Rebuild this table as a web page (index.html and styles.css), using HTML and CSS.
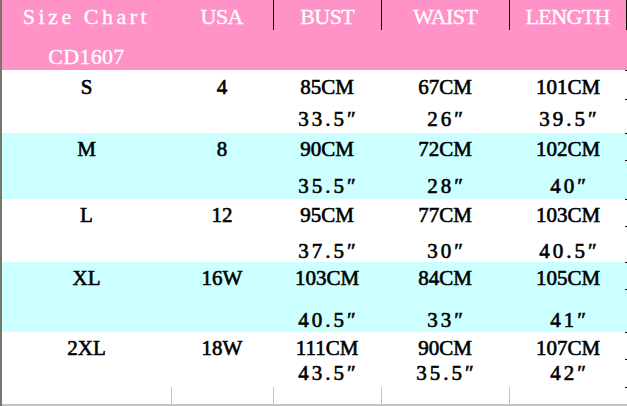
FILE: index.html
```html
<!DOCTYPE html>
<html>
<head>
<meta charset="utf-8">
<link rel="stylesheet" href="styles.css">
</head>
<body>
<div class="sheet">
  <div class="row head">
    <div class="cell"><div class="l1 wide">Size Chart</div><div class="l2">CD1607</div></div>
    <div class="cell"><div class="l1 caps">USA</div></div>
    <div class="cell sep"><div class="l1 caps">BUST</div></div>
    <div class="cell sep"><div class="l1 caps">WAIST</div></div>
    <div class="cell sep last"><div class="l1 caps">LENGTH</div></div>
  </div>
  <div class="row data r-s">
    <div class="cell"><div class="l1">S</div></div>
    <div class="cell"><div class="l1">4</div></div>
    <div class="cell"><div class="l1">85CM</div><div class="l2">33.5″</div></div>
    <div class="cell"><div class="l1">67CM</div><div class="l2">26″</div></div>
    <div class="cell"><div class="l1">101CM</div><div class="l2">39.5″</div></div>
  </div>
  <div class="row data alt r-m">
    <div class="cell"><div class="l1">M</div></div>
    <div class="cell"><div class="l1">8</div></div>
    <div class="cell"><div class="l1">90CM</div><div class="l2">35.5″</div></div>
    <div class="cell"><div class="l1">72CM</div><div class="l2">28″</div></div>
    <div class="cell"><div class="l1">102CM</div><div class="l2">40″</div></div>
  </div>
  <div class="row data r-l">
    <div class="cell"><div class="l1">L</div></div>
    <div class="cell"><div class="l1">12</div></div>
    <div class="cell"><div class="l1">95CM</div><div class="l2">37.5″</div></div>
    <div class="cell"><div class="l1">77CM</div><div class="l2">30″</div></div>
    <div class="cell"><div class="l1">103CM</div><div class="l2">40.5″</div></div>
  </div>
  <div class="row data alt r-xl">
    <div class="cell"><div class="l1">XL</div></div>
    <div class="cell"><div class="l1">16W</div></div>
    <div class="cell"><div class="l1">103CM</div><div class="l2">40.5″</div></div>
    <div class="cell"><div class="l1">84CM</div><div class="l2">33″</div></div>
    <div class="cell"><div class="l1">105CM</div><div class="l2">41″</div></div>
  </div>
  <div class="row data r-2xl">
    <div class="cell"><div class="l1">2XL</div></div>
    <div class="cell"><div class="l1">18W</div></div>
    <div class="cell"><div class="l1">111CM</div><div class="l2">43.5″</div></div>
    <div class="cell"><div class="l1">90CM</div><div class="l2">35.5″</div></div>
    <div class="cell"><div class="l1">107CM</div><div class="l2">42″</div></div>
  </div>
  <div class="row foot">
    <div class="cell"></div>
    <div class="cell tick"></div>
    <div class="cell tick"></div>
    <div class="cell tick"></div>
    <div class="cell tick"></div>
  </div>
</div>
</body>
</html>
```

FILE: styles.css
```css
html, body {
  margin: 0;
  padding: 0;
  background: #ffffff;
}
.sheet {
  width: 625px;
  height: 406px;
  border-left: 2px solid #76766a;
  font-family: "Liberation Serif", "Times New Roman", serif;
  display: flex;
  flex-direction: column;
}
.row {
  display: grid;
  grid-template-columns: 169px 102px 108px 128px 118px;
  position: relative;
}
.cell {
  text-align: center;
  white-space: nowrap;
}
.head {
  height: 70px;
  background: #ff93c8;
  color: #ffffff;
  font-size: 22px;
  -webkit-text-stroke: 0.3px #ffffff;
}
.head .l1 {
  height: 26px;
  line-height: 26px;
  padding-top: 4px;
}
.head .l2 {
  line-height: 26px;
  margin-top: 14px;
  letter-spacing: 0.3px;
}
.head .wide {
  letter-spacing: 3.5px;
}
.head .caps {
  letter-spacing: -0.6px;
  text-indent: -0.6px;
}
.head .sep .l1 {
  border-left: 1px solid #000000;
}
.head .last .l1 {
  border-right: 1px solid #000000;
}
.data {
  color: #000000;
  font-size: 21px;
  -webkit-text-stroke: 0.6px #000000;
  padding-top: 4px;
  box-sizing: border-box;
}
.data .l1, .data .l2 {
  line-height: 24px;
}
.data .l2 {
  letter-spacing: 3px;
  text-indent: 3px;
}
.alt {
  background: #ccffff;
}
.data::before, .data::after, .foot::before {
  content: "";
  position: absolute;
  right: 0;
  width: 2px;
  height: 1px;
  background: #000000;
}
.data::before { top: 0; }
.data::after { top: 27px; }
.r-s::after { top: 29px; }
.foot::before { top: 0; }
.r-s { height: 63px; padding-top: 5px; }
.r-s .l2 { margin-top: 8px; }
.r-m { height: 66px; }
.r-m .l2 { margin-top: 13px; }
.r-l { height: 63px; }
.r-l .l2 { margin-top: 12px; }
.r-xl { height: 70px; }
.r-xl .l2 { margin-top: 18px; }
.r-2xl { height: 55px; }
.r-2xl .l2 { margin-top: 1px; }
.foot {
  height: 19px;
  border-bottom: 2px solid #c4c4c4;
  box-sizing: border-box;
}
.foot .tick {
  border-left: 1px solid #c4c4c4;
}
```
